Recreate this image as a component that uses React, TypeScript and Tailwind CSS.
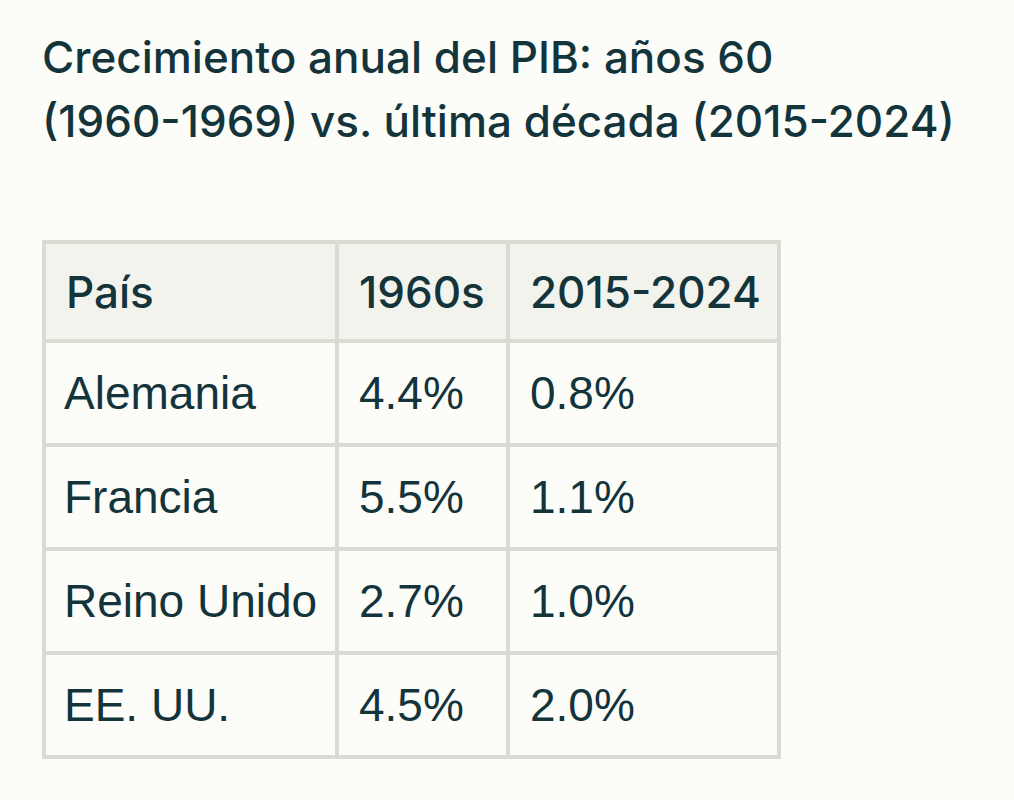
const rows = [
  { country: "Alemania", a: "4.4%", b: "0.8%" },
  { country: "Francia", a: "5.5%", b: "1.1%" },
  { country: "Reino Unido", a: "2.7%", b: "1.0%" },
  { country: "EE. UU.", a: "4.5%", b: "2.0%" },
]

const head = ["País", "1960s", "2015-2024"]

export default function App() {
  return (
    <main className="min-h-screen w-full bg-[#fcfcf9] text-[#13343b] pl-[42px] pt-[25px] font-['Liberation_Sans',Arial,sans-serif]">
      {/* Title */}
      <h1 className="text-[44px] leading-[64px] font-medium font-['Inter','Liberation_Sans',sans-serif]">
        Crecimiento anual del PIB: años 60
        <br />
        (1960-1969) vs. última década (2015-2024)
      </h1>

      {/* Table */}
      <div className="mt-[87px] inline-grid grid-cols-[289px_167px_267px] gap-1 p-1 bg-[#dcdbd3]">
        {head.map((h) => (
          <div
            key={h}
            className="h-[95px] bg-[#f3f3ee] flex items-center pl-5 whitespace-nowrap overflow-hidden text-[44px] font-medium font-['Inter','Liberation_Sans',sans-serif]"
          >
            {h}
          </div>
        ))}
        {rows.map((r) => [
          <div key={r.country + "c"} className="h-[100px] bg-[#fcfcf9] flex items-center pl-[18px] whitespace-nowrap text-[46px]">
            {r.country}
          </div>,
          <div key={r.country + "a"} className="h-[100px] bg-[#fcfcf9] flex items-center pl-5 whitespace-nowrap text-[46px]">
            {r.a}
          </div>,
          <div key={r.country + "b"} className="h-[100px] bg-[#fcfcf9] flex items-center pl-5 whitespace-nowrap text-[46px]">
            {r.b}
          </div>,
        ])}
      </div>
    </main>
  )
}
